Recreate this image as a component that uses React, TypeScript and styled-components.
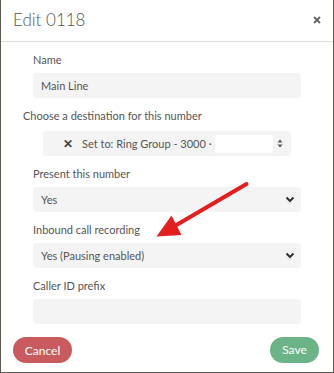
import React from 'react';
import styled, { createGlobalStyle } from 'styled-components';

const GlobalStyle = createGlobalStyle`
	html, body {
		margin: 0;
		padding: 0;
		background: #5d5850;
	}
	body {
		font-family: Lato, "Noto Sans", sans-serif;
		color: #555;
	}
	* {
		box-sizing: border-box;
	}
`;

const Modal = styled.div`
	position: relative;
	width: 332px;
	height: 372px;
	margin: 0 1px;
	background: #fff;
	display: flex;
	flex-direction: column;
	overflow: hidden;
`;

const Header = styled.div`
	height: 42px;
	display: flex;
	align-items: center;
	justify-content: space-between;
	padding: 0 10px 2px 12px;
	border-bottom: 1px solid #dedede;
`;

const Title = styled.h4`
	margin: 0;
	white-space: nowrap;
	font-size: 17px;
	font-weight: 300;
	color: #555;
`;

const CloseBtn = styled.button`
	border: 0;
	background: none;
	padding: 0;
	width: 12px;
	height: 12px;
	display: flex;
	align-items: center;
	justify-content: center;
	cursor: pointer;
`;

const Body = styled.div`
	display: flex;
	flex-direction: column;
	gap: 10px;
	padding: 10px 32px 0;
`;

const Field = styled.div<{ $indent?: number }>`
	display: flex;
	flex-direction: column;
	gap: 5px;
	margin-left: ${(p) => p.$indent ?? 0}px;
`;

const Label = styled.label`
	font-size: 11px;
	line-height: 16px;
	color: #555;
`;

const Input = styled.div`
	height: 25px;
	border-radius: 4px;
	background: #f4f4f4;
	padding: 0 8px;
	display: flex;
	align-items: center;
	font-size: 11px;
	color: #555;
`;

const Select = styled(Input)`
	justify-content: space-between;
	padding-right: 6px;
`;

const DestSelect = styled.div`
	height: 25px;
	margin: 2px 10px 0 20px;
	border-radius: 3px;
	background: #f4f4f4;
	display: flex;
	align-items: center;
	padding: 0 8px 0 20px;
	font-size: 11px;
	color: #555;
	white-space: nowrap;
`;

const Clear = styled.span`
	font-size: 12px;
	font-weight: 700;
	color: #444;
	margin-right: 9px;
`;

const Redacted = styled.span`
	flex: 0 0 58px;
	height: 18px;
	background: #fff;
	margin-left: 3px;
`;

const Carets = styled.span`
	margin-left: auto;
	display: flex;
`;

const Footer = styled.div`
	display: flex;
	justify-content: space-between;
	align-items: flex-start;
	padding: 13px 14px 0 12px;
`;

const PillButton = styled.button<{ $tone: 'danger' | 'success'; $w: number }>`
	width: ${(p) => p.$w}px;
	height: 26px;
	border: 0;
	border-radius: 13px;
	background: ${(p) => (p.$tone === 'danger' ? '#c95b5f' : '#6bb488')};
	color: #fff;
	font-family: Lato, "Noto Sans", sans-serif;
	font-size: 12px;
	padding: 0 0 ${(p) => (p.$tone === 'success' ? 2 : 0)}px;
`;

const ArrowLayer = styled.svg`
	position: absolute;
	left: 0;
	top: 0;
	pointer-events: none;
`;

const Chevron = () => (
	<svg width="10" height="7" viewBox="0 0 10 7">
		<path d="M1.5 1.5 L5 5 L8.5 1.5" fill="none" stroke="#333" strokeWidth="2" />
	</svg>
);

const fields = [
	{ label: 'Present this number', value: 'Yes' },
	{ label: 'Inbound call recording', value: 'Yes (Pausing enabled)' },
];

const App = () => {
	return (
		<>
			<GlobalStyle />
			<Modal>
				<Header>
					<Title>Edit 0118</Title>
					<CloseBtn aria-label="close">
						<svg width="8" height="8" viewBox="0 0 8 8">
							<path d="M1 1 L7 7 M7 1 L1 7" stroke="#666" strokeWidth="1.8" />
						</svg>
					</CloseBtn>
				</Header>
				<Body>
					<Field>
						<Label>Name</Label>
						<Input>Main Line</Input>
					</Field>
					<Field $indent={-10}>
						<Label>Choose a destination for this number</Label>
						<DestSelect>
							<Clear>✕</Clear>
							<span>Set to: Ring Group - 3000 ·</span>
							<Redacted />
							<Carets>
								<svg width="6" height="9" viewBox="0 0 6 9">
									<path d="M3 0.5 L5.5 3.5 H0.5 Z M3 8.5 L5.5 5.5 H0.5 Z" fill="#555" />
								</svg>
							</Carets>
						</DestSelect>
					</Field>
					{fields.map((f) => (
						<Field key={f.label}>
							<Label>{f.label}</Label>
							<Select>
								{f.value}
								<Chevron />
							</Select>
						</Field>
					))}
					<Field>
						<Label>Caller ID prefix</Label>
						<Input />
					</Field>
				</Body>
				<Footer>
					<PillButton $tone="danger" $w={59}>
						Cancel
					</PillButton>
					<PillButton $tone="success" $w={49}>
						Save
					</PillButton>
				</Footer>
				<ArrowLayer width="332" height="372" viewBox="0 0 332 372">
					<line x1="245.5" y1="184" x2="172" y2="227" stroke="#e41e1e" strokeWidth="4" strokeLinecap="round" />
					<path d="M155.5 236.5 L170.5 215.5 L180.5 235 Z" fill="#e41e1e" />
				</ArrowLayer>
			</Modal>
		</>
	);
};

export default App;
